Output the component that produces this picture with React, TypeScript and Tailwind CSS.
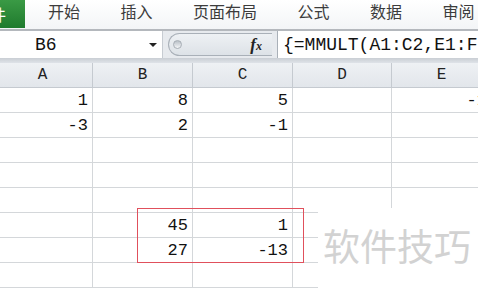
const tabs = ['开始', '插入', '页面布局', '公式', '数据', '审阅'];
const cols = ['A', 'B', 'C', 'D', 'E'];

const rows: string[][] = [
  ['1', '8', '5', '', '-1'],
  ['-3', '2', '-1', '', ''],
  ['', '', '', '', ''],
  ['', '', '', '', ''],
  ['', '', '', '', ''],
  ['', '45', '1', '', ''],
  ['', '27', '-13', '', ''],
  ['', '', '', '', ''],
];

const colWidth = (i: number) => (i === 3 ? 'w-[99px]' : 'w-[100px]');

const App = () => {
  return (
    <div className="relative w-[478px] h-[288px] overflow-hidden bg-white font-['Liberation_Sans','Noto_Sans_CJK_SC',sans-serif]">
      {/* ribbon tabs */}
      <div className="flex h-[29px] items-start bg-gradient-to-b from-white to-[#f3f5f7]">
        <div className="w-[25px] h-[28px] shrink-0 overflow-hidden bg-gradient-to-b from-[#3a9a45] to-[#1f7b2e] flex items-center">
          <span className="ml-[-26px] text-[16px] leading-none text-white font-['Noto_Sans_CJK_SC',sans-serif]">文件</span>
        </div>
        <div className="ml-[23px] flex gap-[40.5px] pt-[3px]">
          {tabs.map((t) => (
            <span key={t} className="shrink-0 text-[16px] leading-[16px] text-[#3c3c3c] font-['Noto_Sans_CJK_SC',sans-serif]">
              {t}
            </span>
          ))}
        </div>
      </div>
      <div className="h-[2px] bg-[#b4b8bd]" />

      {/* formula bar */}
      <div className="flex h-[27px] bg-[#e7eaee]">
        <div className="w-[163px] shrink-0 flex items-center bg-white border-r border-[#c7ccd2]">
          <span className="ml-[35px] text-[18px] leading-none text-[#111] font-['Liberation_Mono',monospace]">B6</span>
          <span className="ml-auto mr-[5px] w-0 h-0 border-l-[4px] border-r-[4px] border-t-[4px] border-l-transparent border-r-transparent border-t-[#222]" />
        </div>
        <div className="w-[114px] shrink-0 flex items-center">
          <div className="ml-[5px] h-[23px] w-[104px] rounded-l-full border-l border-y border-[#a9b0b8] bg-gradient-to-b from-[#eef1f4] to-[#dde2e7] flex items-center">
            <span className="ml-[4px] w-[9px] h-[9px] rounded-full bg-gradient-to-b from-[#b9c0c7] to-[#f4f6f8] border border-[#a7aeb5]" />
            <span className="ml-auto mr-[10px] text-[17px] leading-none italic font-bold text-[#222] font-['Liberation_Serif',serif]">
              f<span className="text-[12px]">x</span>
            </span>
          </div>
        </div>
        <div className="flex-1 min-w-0 overflow-hidden flex items-center bg-white border-l border-[#a9b0b8]">
          <span className="ml-[5px] text-[18px] leading-none text-[#111] whitespace-nowrap font-['Liberation_Mono',monospace]">
            {'{=MMULT(A1:C2,E1:F2)}'}
          </span>
        </div>
      </div>
      <div className="h-[5px] bg-gradient-to-b from-[#c9ced4] to-[#dfe3e8]" />

      {/* column headers */}
      <div className="flex ml-[-7px] h-[25px] bg-gradient-to-b from-[#eef1f4] to-[#e2e6eb] border-b border-[#c5cad0]">
        {cols.map((c, i) => (
          <div key={c} className={`${colWidth(i)} shrink-0 border-r border-[#c5cad0] flex items-center justify-center text-[16px] text-[#222] font-['Liberation_Mono',monospace]`}>
            {c}
          </div>
        ))}
      </div>

      {/* cells */}
      {rows.map((r, ri) => (
        <div key={ri} className="flex ml-[-7px] h-[25px] border-b border-[#d4d7da]">
          {r.map((v, ci) => (
            <div
              key={ci}
              className={`${colWidth(ci)} shrink-0 border-r border-[#d4d7da] flex items-center justify-end pr-[4px] text-[17px] leading-none text-[#111] font-['Liberation_Mono',monospace]`}
            >
              {v}
            </div>
          ))}
        </div>
      ))}

      {/* red annotation box */}
      <div className="absolute left-[137px] top-[208px] w-[167px] h-[55px] border-[1.5px] border-[#e0505c]" />

      {/* watermark */}
      <div className="absolute left-[318px] top-[208px] w-[160px] h-[80px] bg-white">
        <div className="pl-[5px] pt-[19px] text-[37px] leading-[37px] text-[#d2d2d2] whitespace-nowrap font-['Noto_Sans_CJK_SC',sans-serif]">
          软件技巧
        </div>
      </div>
    </div>
  );
};

export default App;
